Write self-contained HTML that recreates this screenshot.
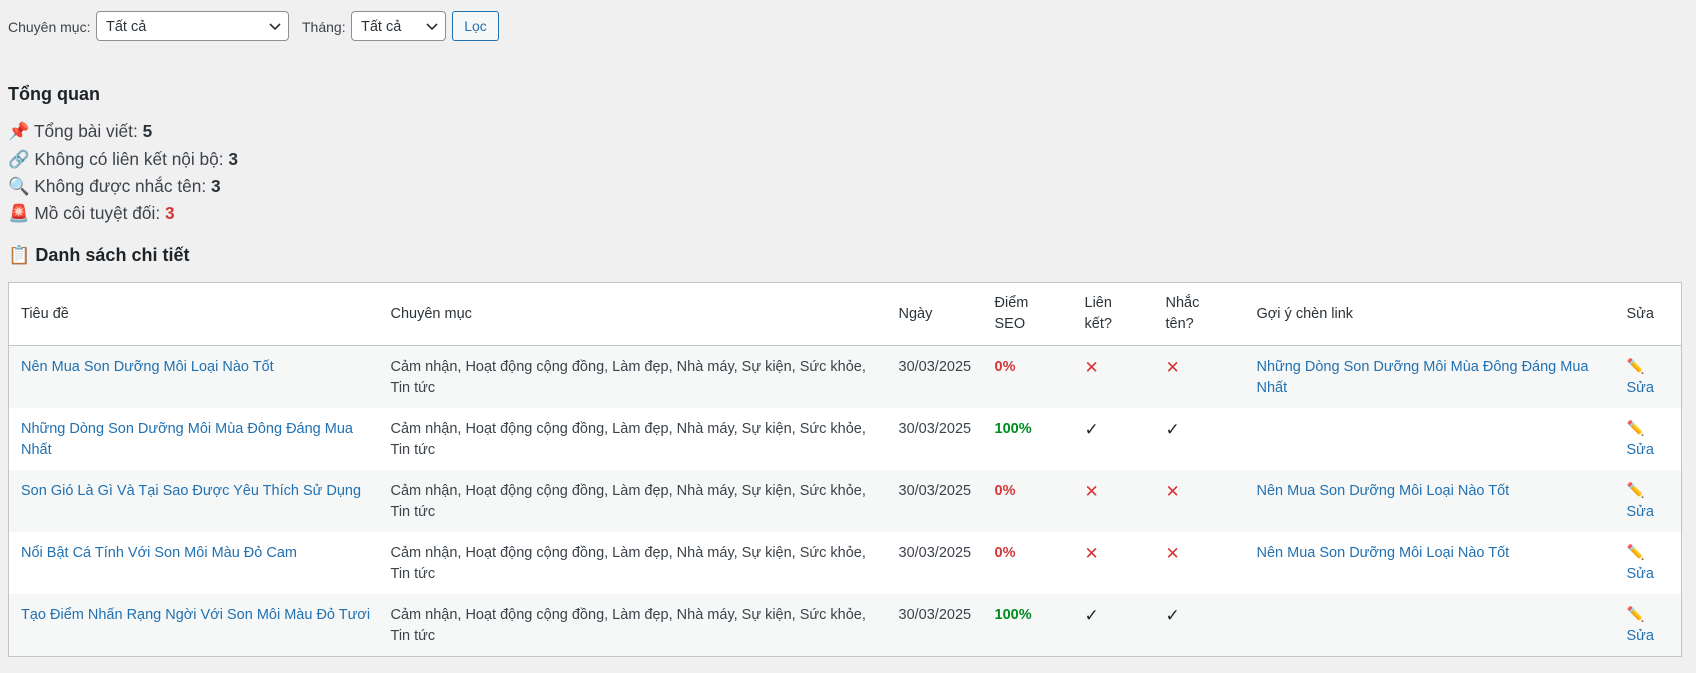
<!DOCTYPE html>
<html><head><meta charset="utf-8"><style>
body{margin:0;background:#f0f0f1;font-family:"Liberation Sans","DejaVu Sans",sans-serif;color:#3c434a;font-size:14px;width:1696px;height:673px;overflow:hidden;position:relative}
.a{position:absolute}
.sel{position:absolute;top:11px;height:30px;box-sizing:border-box;border:1px solid #8c8f94;border-radius:4px;background:#fff;color:#2c3338;font-size:14.5px;line-height:30px;padding-left:9px}
.sel svg{position:absolute;right:6px;top:10px}
.lbl{position:absolute;top:12px;line-height:30px;font-size:14px;color:#3c434a}
.btn{position:absolute;left:452px;top:11px;width:47px;height:30px;box-sizing:border-box;border:1px solid #2271b1;border-radius:3px;background:#f6f7f7;color:#2271b1;font-size:14px;line-height:29px;text-align:center}
.ov{position:absolute;left:8px;font-size:17.3px;line-height:27px;color:#3c434a}
.ov b{color:#2c3338}
table{position:absolute;left:8px;top:282px;width:1674px;border:1px solid #c3c4c7;border-collapse:collapse;table-layout:fixed;background:#fff}
th,td{text-align:left;font-weight:normal;padding:0 6px 0 12px;font-size:14.5px;line-height:21px;vertical-align:top}
th{height:62px;vertical-align:middle;border-bottom:1px solid #c3c4c7;color:#2c3338}
td{height:42px;padding-top:11px;padding-bottom:9px}
tr.o td{background:#f6f7f7}
a{color:#2271b1;text-decoration:none}
.r{color:#d63638;font-weight:bold}.g{color:#008a20;font-weight:bold}
.x{color:#d63638;font-size:17px}.c{color:#1d2327;font-size:17px}
</style></head><body>
<div class="lbl" style="left:8px">Chuyên mục:</div>
<div class="sel" style="left:96px;width:193px">Tất cả<svg width="14" height="10" viewBox="0 0 14 10"><path d="M2 2l5 5 5-5" fill="none" stroke="#2c3338" stroke-width="1.6"/></svg></div>
<div class="lbl" style="left:302px">Tháng:</div>
<div class="sel" style="left:351px;width:95px">Tất cả<svg width="14" height="10" viewBox="0 0 14 10"><path d="M2 2l5 5 5-5" fill="none" stroke="#2c3338" stroke-width="1.6"/></svg></div>
<div class="btn">Lọc</div>
<div class="a" style="left:8px;top:84px;font-size:18px;font-weight:bold;color:#1d2327">Tổng quan</div>
<div class="ov" style="top:118px">📌 Tổng bài viết: <b>5</b></div>
<div class="ov" style="top:146px">🔗 Không có liên kết nội bộ: <b>3</b></div>
<div class="ov" style="top:173px">🔍 Không được nhắc tên: <b>3</b></div>
<div class="ov" style="top:200px">🚨 Mồ côi tuyệt đối: <b style="color:#d63638">3</b></div>
<div class="a" style="left:8px;top:245px;font-size:18px;font-weight:bold;color:#1d2327">📋 Danh sách chi tiết</div>
<table>
<colgroup><col style="width:370px"><col style="width:508px"><col style="width:96px"><col style="width:90px"><col style="width:81px"><col style="width:91px"><col style="width:370px"><col></colgroup>
<tr><th>Tiêu đề</th><th>Chuyên mục</th><th>Ngày</th><th>Điểm<br>SEO</th><th>Liên<br>kết?</th><th>Nhắc<br>tên?</th><th>Gợi ý chèn link</th><th>Sửa</th></tr>
<tr class="o"><td><a>Nên Mua Son Dưỡng Môi Loại Nào Tốt</a></td><td>Cảm nhận, Hoạt động cộng đồng, Làm đẹp, Nhà máy, Sự kiện, Sức khỏe, Tin tức</td><td>30/03/2025</td><td class="r">0%</td><td class="x">✕</td><td class="x">✕</td><td><a>Những Dòng Son Dưỡng Môi Mùa Đông Đáng Mua Nhất</a></td><td>✏️<br><a>Sửa</a></td></tr>
<tr><td><a>Những Dòng Son Dưỡng Môi Mùa Đông Đáng Mua Nhất</a></td><td>Cảm nhận, Hoạt động cộng đồng, Làm đẹp, Nhà máy, Sự kiện, Sức khỏe, Tin tức</td><td>30/03/2025</td><td class="g">100%</td><td class="c">✓</td><td class="c">✓</td><td></td><td>✏️<br><a>Sửa</a></td></tr>
<tr class="o"><td><a>Son Gió Là Gì Và Tại Sao Được Yêu Thích Sử Dụng</a></td><td>Cảm nhận, Hoạt động cộng đồng, Làm đẹp, Nhà máy, Sự kiện, Sức khỏe, Tin tức</td><td>30/03/2025</td><td class="r">0%</td><td class="x">✕</td><td class="x">✕</td><td><a>Nên Mua Son Dưỡng Môi Loại Nào Tốt</a></td><td>✏️<br><a>Sửa</a></td></tr>
<tr><td><a>Nổi Bật Cá Tính Với Son Môi Màu Đỏ Cam</a></td><td>Cảm nhận, Hoạt động cộng đồng, Làm đẹp, Nhà máy, Sự kiện, Sức khỏe, Tin tức</td><td>30/03/2025</td><td class="r">0%</td><td class="x">✕</td><td class="x">✕</td><td><a>Nên Mua Son Dưỡng Môi Loại Nào Tốt</a></td><td>✏️<br><a>Sửa</a></td></tr>
<tr class="o"><td><a>Tạo Điểm Nhấn Rạng Ngời Với Son Môi Màu Đỏ Tươi</a></td><td>Cảm nhận, Hoạt động cộng đồng, Làm đẹp, Nhà máy, Sự kiện, Sức khỏe, Tin tức</td><td>30/03/2025</td><td class="g">100%</td><td class="c">✓</td><td class="c">✓</td><td></td><td>✏️<br><a>Sửa</a></td></tr>
</table>
</body></html>
